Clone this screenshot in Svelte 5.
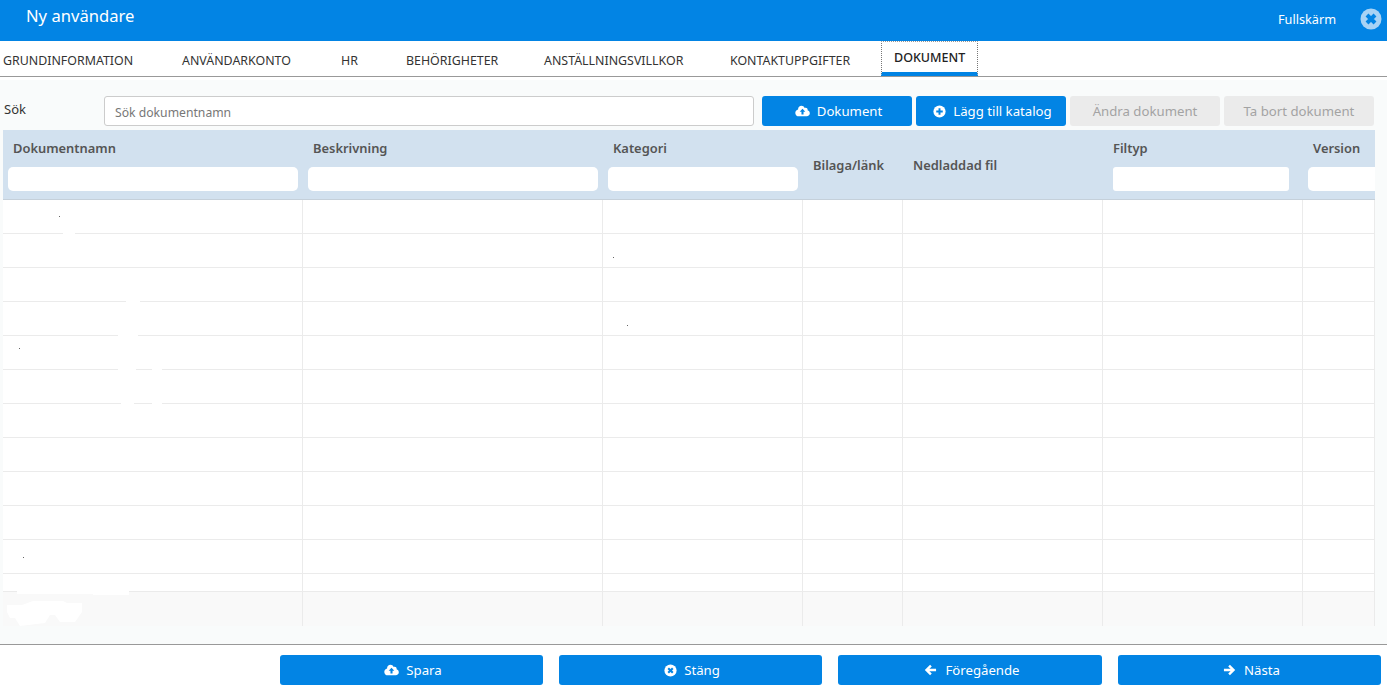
<script>
	const tabs = [
		{ label: 'GRUNDINFORMATION', width: 179 },
		{ label: 'ANVÄNDARKONTO', width: 159 },
		{ label: 'HR', width: 65 },
		{ label: 'BEHÖRIGHETER', width: 138 },
		{ label: 'ANSTÄLLNINGSVILLKOR', width: 186 },
		{ label: 'KONTAKTUPPGIFTER', width: 151 }
	];
	const columns = [
		{ name: 'Dokumentnamn', width: 300, filter: true },
		{ name: 'Beskrivning', width: 300, filter: true },
		{ name: 'Kategori', width: 200, filter: true },
		{ name: 'Bilaga/länk', width: 100 },
		{ name: 'Nedladdad fil', width: 200 },
		{ name: 'Filtyp', width: 200, filter: 'inset' },
		{ name: 'Version', width: 72, filter: 'clip' }
	];
	const rows = Array.from({ length: 11 });

	// blanked-out spots left in the grid, x/y/w/h relative to the grid
	const patches = [
		[60, 103, 12, 1], [123, 171, 14, 1], [115, 205, 20, 1], [115, 239, 18, 1], [149, 239, 10, 1],
		[118, 273, 13, 1], [149, 273, 10, 1], [14, 461, 112, 3], [90, 464, 36, 1]
	];
	const dots = [
		[56, 86], [16, 218], [20, 427], [610, 127], [624, 195]
	];
</script>

{#snippet cloud()}
	<svg class="icon" viewBox="0 0 16 12"><path fill="currentColor" d="M13.4 5.3C13.5 5.1 13.5 4.8 13.5 4.6 13.5 3.4 12.6 2.5 11.4 2.5 11 2.500 10.600 2.600 10.300 2.800 9.700 1.200 8.300 0.300 6.900 0.300 4.900 0.300 3.300 1.900 3.300 3.900 3.300 4.100 3.300 4.300 3.300 4.500 1.600 4.900 0.300 6.300 0.300 8 0.300 10.100 2 11.700 4 11.700H12.500C14.400 11.700 15.800 10.200 15.800 8.500 15.800 7 14.800 5.700 13.400 5.300Z" /><path fill="#0284e4" d="M8 3.700 11 6.900H9.100V9.800H6.900V6.900H5Z" /></svg>
{/snippet}

{#snippet circleX()}
	<svg class="icon round" viewBox="0 0 16 16"><circle fill="currentColor" cx="8" cy="8" r="7.500" /><path stroke="#0284e4" stroke-width="2.600" d="M5.200 5.200 10.800 10.800M10.800 5.200 5.200 10.800" /></svg>
{/snippet}

<div class="page">
	<header class="topbar">
		<h1>Ny användare</h1>
		<span class="fullscreen">Fullskärm</span>
		<svg class="close" viewBox="0 0 22 22"><circle cx="11" cy="11" r="10.500" fill="#a8d3f5" /><path stroke="#0284e4" stroke-width="4" d="M7 7 15 15M15 7 7 15" /></svg>
	</header>

	<nav class="tabs">
		{#each tabs as tab}
			<span class="tab" style="width: {tab.width}px">{tab.label}</span>
		{/each}
		<span class="tab active">DOKUMENT</span>
	</nav>

	<main class="content">
		<div class="toolbar">
			<span class="search-label">Sök</span>
			<input class="search" placeholder="Sök dokumentnamn" />
			<button class="btn">{@render cloud()}Dokument</button>
			<button class="btn">
				<svg class="icon round" viewBox="0 0 16 16"><circle fill="currentColor" cx="8" cy="8" r="7.500" /><path stroke="#0284e4" stroke-width="2.400" d="M8 4V12M4 8H12" /></svg>
				Lägg till katalog
			</button>
			<button class="btn disabled">Ändra dokument</button>
			<button class="btn disabled">Ta bort dokument</button>
		</div>

		<div class="grid">
			<div class="row head">
				{#each columns as col}
					<div class="th" class:plain={!col.filter} style="width: {col.width}px">
						<span>{col.name}</span>
						{#if col.filter}
							<input class="filter" class:inset={col.filter === 'inset'} class:clip={col.filter === 'clip'} />
						{/if}
					</div>
				{/each}
			</div>
			{#each rows as _}
				<div class="row body">
					{#each columns as col}
						<div class="td" style="width: {col.width}px"></div>
					{/each}
				</div>
			{/each}
			<div class="row short">
				{#each columns as col}
					<div class="td" style="width: {col.width}px"></div>
				{/each}
			</div>
			<div class="row foot">
				{#each columns as col}
					<div class="td" style="width: {col.width}px"></div>
				{/each}
			</div>

			{#each patches as [x, y, w, h]}
				<i class="patch" style="left: {x}px; top: {y}px; width: {w}px; height: {h}px"></i>
			{/each}
			{#each dots as [x, y]}
				<i class="dot" style="left: {x}px; top: {y}px"></i>
			{/each}
			<i class="blob"></i>
		</div>
	</main>

	<footer class="actions">
		<button class="btn wide">{@render cloud()}Spara</button>
		<button class="btn wide">{@render circleX()}Stäng</button>
		<button class="btn wide">
			<svg class="icon" viewBox="0 0 14 14"><path fill="none" stroke="currentColor" stroke-width="2.800" d="M7.500 1.800 2.300 7 7.500 12.200M2.800 7H13.500" /></svg>
			Föregående
		</button>
		<button class="btn wide">
			<svg class="icon" viewBox="0 0 14 14"><path fill="none" stroke="currentColor" stroke-width="2.800" d="M6.500 1.800 11.700 7 6.500 12.200M11.200 7H0.500" /></svg>
			Nästa
		</button>
	</footer>
</div>

<style>
	:global(body) {
		background: #fff;
	}

	.page {
		width: 1387px;
		height: 698px;
		display: flex;
		flex-direction: column;
		font-family: 'Noto Sans', 'Open Sans', sans-serif;
		font-size: 13px;
		color: #333;
	}

	.topbar {
		height: 41px;
		flex: none;
		display: flex;
		align-items: flex-start;
		background: #0284e4;
		color: #fff;
	}

	h1 {
		flex: 1;
		margin: 5px 0 0 26px;
		font-size: 16.600px;
		font-weight: 400;
		line-height: 22px;
	}

	.fullscreen {
		margin: 10px 24px 0 0;
		font-size: 12.700px;
		line-height: 18px;
	}

	.close {
		width: 22px;
		height: 22px;
		margin: 8px 5px 0 0;
	}

	.tabs {
		height: 35px;
		flex: none;
		display: flex;
		padding-left: 3px;
		background: #fff;
		border-bottom: 1px solid #999;
		font-size: 12.400px;
		line-height: 40px;
	}

	.tab {
		flex: none;
		white-space: nowrap;
	}

	.tab.active {
		padding: 0 12px;
		height: 35px;
		box-sizing: border-box;
		border: 1px dotted #777;
		border-top-color: #999;
		border-bottom: 4px solid #0284e4;
		font-size: 12.500px;
		line-height: 32px;
		color: #222;
		font-weight: 500;
	}

	.content {
		flex: 1;
		padding: 3px 0 18px;
		margin-top: 3px;
		background: #f9fbfb;
		display: flex;
		flex-direction: column;
		min-height: 0;
	}

	.toolbar {
		height: 30px;
		margin-top: 13px;
		display: flex;
		gap: 4px;
		padding-left: 4px;
	}

	.search-label {
		width: 96px;
		line-height: 26px;
	}

	.search {
		width: 650px;
		height: 30px;
		box-sizing: border-box;
		margin-right: 4px;
		padding: 2px 10px 0;
		border: 1px solid #ccc;
		border-radius: 3px;
		background: #fff;
		font: inherit;
		font-size: 12.200px;
	}

	.search::placeholder {
		color: #777;
	}

	.btn {
		width: 150px;
		height: 30px;
		display: flex;
		align-items: center;
		justify-content: center;
		gap: 7px;
		padding: 0 0 0 3px;
		border: 0;
		border-radius: 3px;
		background: #0284e4;
		color: #fff;
		font: inherit;
		font-size: 13.200px;
	}

	.btn.disabled {
		padding: 0;
		background: #ebebeb;
		color: #a3a3a3;
	}

	.btn.wide {
		width: 263px;
	}

	.btn.wide:nth-child(3) {
		width: 264px;
	}

	.icon {
		width: 15px;
		height: 12px;
		flex: none;
	}

	.icon.round {
		width: 13px;
		height: 13px;
	}

	.grid {
		position: relative;
		margin: 4px 12px 0 3px;
		display: flex;
		flex-direction: column;
		overflow: hidden;
	}

	.patch,
	.dot,
	.blob {
		position: absolute;
	}

	.patch {
		background: #fff;
	}

	.dot {
		width: 1px;
		height: 1px;
		background: #666;
	}

	.blob {
		left: 3px;
		top: 470px;
		width: 78px;
		height: 27px;
		background: #fff;
		clip-path: polygon(1px 5px, 16px 5px, 27px 1px, 57px 1px, 61px 3px, 76px 3px, 76px 12px, 69px 22px, 54px 22px, 49px 15px, 44px 15px, 39px 23px, 14px 26px, 9px 18px, 4px 18px, 1px 12px);
	}

	.row {
		display: flex;
		flex: none;
		background: #fff;
		border-bottom: 1px solid #ebebeb;
	}

	.row.head {
		height: 69px;
		background: #d2e1ef;
		border-bottom: 1px solid #c5d0da;
	}

	.row.body {
		height: 33px;
	}

	.row.short {
		height: 17px;
	}

	.row.foot {
		height: 35px;
		border-bottom: 0;
		background: #f9f9f9;
	}

	.th {
		flex: none;
		box-sizing: border-box;
		padding: 10px 5px 0;
		color: #555;
		font-size: 12.900px;
		font-weight: 600;
	}

	.th span {
		display: block;
		padding-left: 5px;
		line-height: 17px;
	}

	.th.plain {
		padding-top: 27px;
	}

	.filter {
		display: block;
		width: 100%;
		height: 24px;
		box-sizing: border-box;
		margin-top: 10px;
		border: 0;
		border-radius: 5px;
		background: #fff;
	}

	.filter.inset {
		width: 176px;
		margin-left: 5px;
		border-radius: 3px;
	}

	.filter.clip {
		width: 100px;
	}

	.td {
		flex: none;
		box-sizing: border-box;
		border-right: 1px solid #ebebeb;
	}

	.actions {
		height: 54px;
		flex: none;
		display: flex;
		justify-content: flex-end;
		gap: 16px;
		padding: 10px 6px 0 0;
		box-sizing: border-box;
		border-top: 1px solid #999;
		background: #fff;
	}
</style>
